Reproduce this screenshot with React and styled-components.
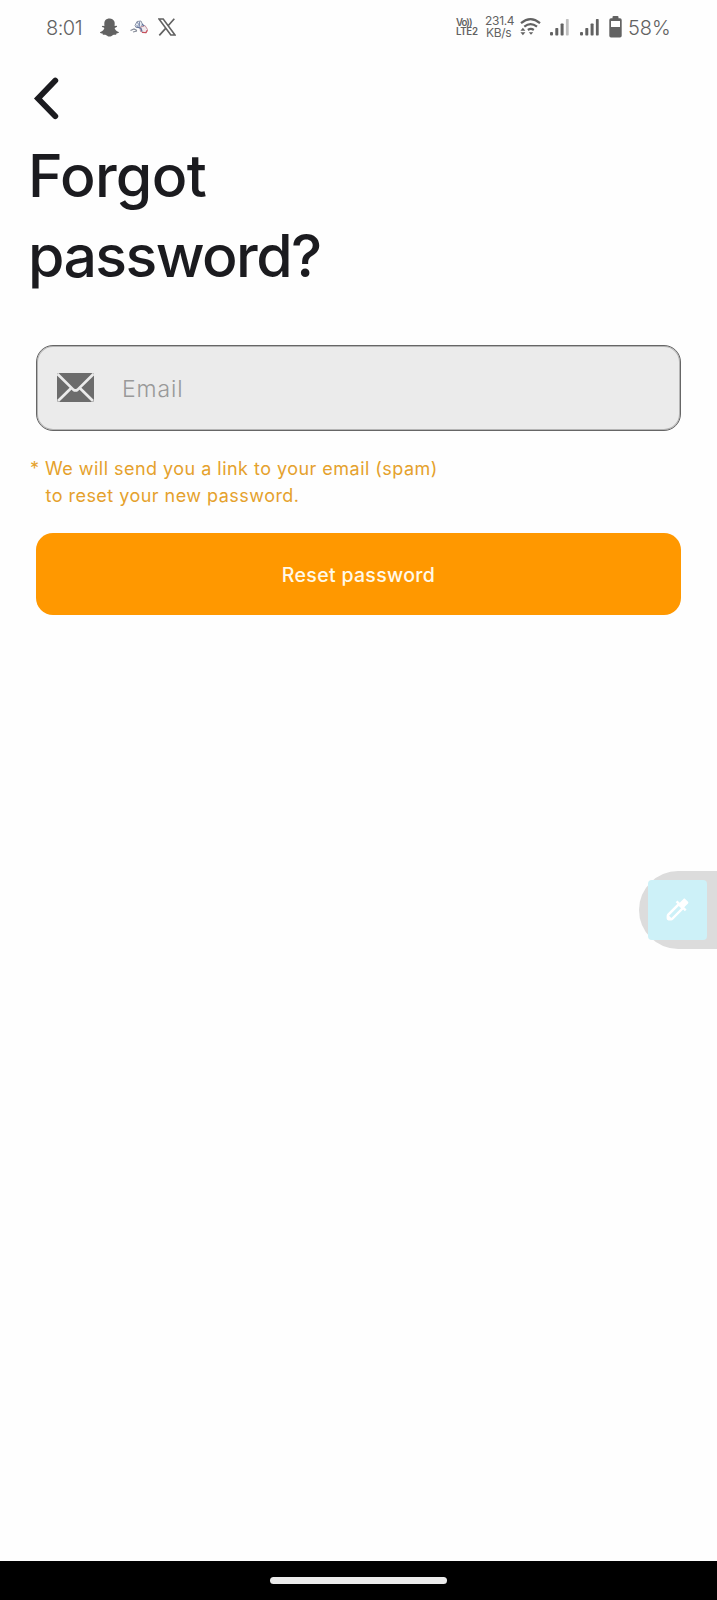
import React from "react";
import styled, { createGlobalStyle } from "styled-components";
import { FaSnapchatGhost } from "react-icons/fa";

const GlobalStyle = createGlobalStyle`
  * { box-sizing: border-box; }
  body { margin: 0; background: #fefefe; font-family: Inter, Roboto, sans-serif; }
  svg { display: block; flex: none; }
`;

const Screen = styled.div`
  position: relative;
  width: 717px;
  height: 1600px;
  display: flex;
  flex-direction: column;
  overflow: hidden;
  background: #fefefe;
`;

const StatusBar = styled.header`
  height: 54px;
  padding: 0 46px 0 46px;
  display: flex;
  align-items: center;
  justify-content: space-between;
  color: #626262;
`;

const StatusGroup = styled.div`
  display: flex;
  align-items: center;
`;

const StatusText = styled.span`
  font: 300 20px/24px Inter, sans-serif;
  letter-spacing: ${(p) => p.$spacing || "0"};
  width: ${(p) => p.$width}px;
  padding-top: 1px;
  white-space: nowrap;
`;

const IconSlot = styled.span`
  display: flex;
  margin-left: ${(p) => p.$gap}px;
`;

const Stack = styled.div`
  display: flex;
  flex-direction: column;
  white-space: nowrap;
  width: ${(p) => p.$width}px;
  margin-right: ${(p) => p.$gap}px;
  font: ${(p) => p.$font};
  letter-spacing: ${(p) => p.$spacing};
`;

const StackLine = styled.span`
  letter-spacing: ${(p) => p.$spacing || "inherit"};
  padding-left: ${(p) => p.$indent || 0}px;
`;

const Content = styled.main`
  flex: 1;
  padding: 21px 36px 0;
`;

const BackButton = styled.button`
  display: block;
  border: 0;
  padding: 0;
  margin-left: -4px;
  background: none;
  color: #1b1b1f;
`;

const Title = styled.h1`
  margin: 15px 0 0 -8px;
  font: 500 59px/80px Inter, sans-serif;
  color: #1b1b1f;
`;

const TitleLine = styled.span`
  display: block;
  letter-spacing: ${(p) => p.$spacing}px;
`;

const Field = styled.label`
  display: flex;
  align-items: center;
  height: 86px;
  margin-top: 49px;
  padding: 0 0 1px 20px;
  gap: 28px;
  border: 1px solid #666;
  border-radius: 17px;
  background: #ebebeb;
  box-shadow: inset 0 0 0 1px #b5b5b5;
  color: #6c6c6c;
`;

const Input = styled.input`
  flex: 1;
  min-width: 0;
  border: 0;
  outline: 0;
  padding: 3px 0 0;
  background: none;
  font: 300 23px/28px Inter, sans-serif;
  letter-spacing: 0.9px;
  &::placeholder { color: #999; opacity: 1; }
`;

const Hint = styled.p`
  margin: 25px 0 0 -6px;
  font: 400 18px/26.5px Inter, sans-serif;
  letter-spacing: 0.47px;
  color: #e5a12c;
`;

const HintLine = styled.span`
  display: block;
  white-space: nowrap;
  padding-left: ${(p) => p.$indent || 0}px;
`;

const ResetButton = styled.button`
  display: flex;
  align-items: center;
  justify-content: center;
  width: 100%;
  height: 82px;
  margin-top: 24px;
  padding: 2px 0 0;
  border: 0;
  border-radius: 17px;
  background: #ff9800;
  color: #fff9e8;
  font: 500 19.5px/24px Inter, sans-serif;
  letter-spacing: 0.32px;
`;

const FloatingTab = styled.aside`
  position: absolute;
  right: 0;
  top: 871px;
  width: 78px;
  height: 78px;
  padding: 9px;
  border-radius: 39px 0 0 39px;
  background: #dcdcdc;
`;

const PickerButton = styled.div`
  display: flex;
  align-items: center;
  justify-content: center;
  width: 59px;
  height: 60px;
  padding: 0 1px 2px 0;
  border-radius: 4px;
  background: #cdf1f8;
  color: #fff;
`;

const NavBar = styled.footer`
  height: 39px;
  display: flex;
  justify-content: center;
  align-items: center;
  background: #000;
`;

const HomeHandle = styled.div`
  width: 177px;
  height: 7px;
  border-radius: 4px;
  background: #ebebeb;
`;

const GameIcon = () => (
  <svg width="18" height="14" viewBox="0 0 18 14" fill="none">
    <path d="M5 5.5 7 1.5 11 1 12.5 4.5 10.5 7.5H6Z" fill="#e8edf4" stroke="#8d95a7" strokeWidth="1" />
    <path d="m7 2 2.5 3.5M9.5 1.5v5M6 6h4" stroke="#8290b0" />
    <path d="M.5 10.5 4 9l3 1.5M3 12l4-1" stroke="#858b97" strokeWidth="1.2" />
    <path d="m10 7.5 5-2 2.5 4-2 3.2-5-1.2Z" fill="#f0e9ed" stroke="#c48f9b" strokeWidth="1" />
    <path d="m7 7 4 1.5 1 3M12 4l2 2" stroke="#62749c" strokeWidth="1.3" />
    <path d="m12 12.5 4 .2 1.5-2.5" stroke="#c84f5b" strokeWidth="1.2" />
  </svg>
);

const XIcon = () => (
  <svg width="18" height="18" viewBox="0 0 18 18" fill="none" stroke="currentColor">
    <path d="M1 1h4.200L17 17h-4.200Z" strokeWidth="1.600" />
    <path d="M16.300.7 10.100 7.700M7.900 10.200 1.300 17.300" strokeWidth="1.700" />
  </svg>
);

const WifiIcon = () => (
  <svg width="21" height="18" viewBox="0 0 21 18" fill="none" stroke="currentColor">
    <path d="M1 5.2Q10.500-2.800 20 5.200" strokeWidth="2.200" />
    <path d="M4.300 8.700Q10.500 3.700 17 8.700" strokeWidth="2.200" />
    <path d="M7.900 12Q10.800 9.800 13.800 12" strokeWidth="2.200" />
    <path d="m8.800 14.200 2.200 2.500 2.200-2.500Z" fill="currentColor" stroke="none" />
    <path d="m.4 12.800 2.500-3 2.500 3ZM.4 14.200l2.500 3 2.500-3Z" fill="currentColor" stroke="none" />
  </svg>
);

const SignalIcon = ({ weak }) => (
  <svg width="19" height="17" viewBox="0 0 19 17" fill="currentColor">
    <rect x="0" y="13" width="3" height="3.500" rx="1" />
    <rect x="5.300" y="9" width="3" height="7.500" rx=".7" />
    <rect x="10.600" y="4.500" width="3" height="12" rx=".7" />
    <rect x="15.900" y="0" width="2.800" height="16.500" rx=".7" opacity={weak ? 0.4 : 1} />
  </svg>
);

const BatteryIcon = () => (
  <svg width="13" height="22" viewBox="0 0 13 22" fill="currentColor">
    <rect x="3.500" width="6" height="4" rx="1" />
    <path fillRule="evenodd" d="M2 2.200h9a1.700 1.700 0 0 1 1.700 1.700v15.800a1.700 1.700 0 0 1-1.700 1.700H2A1.700 1.700 0 0 1 .3 19.700V3.900A1.700 1.700 0 0 1 2 2.200ZM2 5v6h9V5Z" />
  </svg>
);

const MailIcon = () => (
  <svg width="37" height="29" viewBox="0 0 37 29">
    <rect width="37" height="29" rx="2" fill="currentColor" />
    <path d="M.5 1 16.300 16.600Q18.500 18.300 20.700 16.600L36.500 1M1 28 14 15.200M36 28 23 15.200" fill="none" stroke="#ebebeb" strokeWidth="2.700" />
  </svg>
);

const PickerIcon = () => (
  <svg width="29" height="29" viewBox="0 0 24 24" fill="currentColor">
    <path d="M20.710 5.630l-2.340-2.340c-.39-.39-1.020-.39-1.410 0l-3.120 3.120-1.930-1.910-1.410 1.410 1.420 1.420L3.700 15.550A2.500 2.500 0 0 0 3 17.300V19.500a1.500 1.500 0 0 0 1.500 1.500h2.200a2.500 2.500 0 0 0 1.750-.7l8.220-8.220 1.420 1.420 1.410-1.410-1.920-1.920 3.120-3.120c.4-.4.4-1.030.01-1.420zM6.920 19L5 17.080l8.060-8.060 1.920 1.920L6.920 19z" />
  </svg>
);

export default function App() {
  return (
    <Screen>
      <GlobalStyle />
      <StatusBar>
        <StatusGroup>
          <StatusText $width={36} $spacing="-0.5px">8:01</StatusText>
          <IconSlot $gap={18}><FaSnapchatGhost size={19} /></IconSlot>
          <IconSlot $gap={11}><GameIcon /></IconSlot>
          <IconSlot $gap={10}><XIcon /></IconSlot>
        </StatusGroup>
        <StatusGroup>
          <Stack $width={22} $gap={7} $font="600 9.7px/9px Inter, sans-serif" $spacing="-0.3px">
            <StackLine $spacing="-1px">Vo))</StackLine>
            <StackLine>LTE2</StackLine>
          </Stack>
          <Stack $width={28} $gap={7} $font="400 12px/12px Inter, sans-serif" $spacing="-0.3px">
            <StackLine>231.4</StackLine>
            <StackLine $indent={1}>KB/s</StackLine>
          </Stack>
          <WifiIcon />
          <IconSlot $gap={9}><SignalIcon weak /></IconSlot>
          <IconSlot $gap={11}><SignalIcon /></IconSlot>
          <IconSlot $gap={10}><BatteryIcon /></IconSlot>
          <IconSlot $gap={6}><StatusText $width={43}>58%</StatusText></IconSlot>
        </StatusGroup>
      </StatusBar>
      <Content>
        <BackButton aria-label="Back">
          <svg width="30" height="46" viewBox="0 0 30 46" fill="none" stroke="currentColor" strokeWidth="5.800" strokeLinecap="round" strokeLinejoin="miter">
            <path d="M23.300 5.500 6 23.500 23.300 41.200" />
          </svg>
        </BackButton>
        <Title>
          <TitleLine $spacing={-0.7}>Forgot</TitleLine>
          <TitleLine $spacing={-1.6}>password?</TitleLine>
        </Title>
        <Field>
          <MailIcon />
          <Input type="email" placeholder="Email" />
        </Field>
        <Hint>
          <HintLine>* We will send you a link to your email (spam)</HintLine>
          <HintLine $indent={15.5}>to reset your new password.</HintLine>
        </Hint>
        <ResetButton>Reset password</ResetButton>
      </Content>
      <FloatingTab>
        <PickerButton><PickerIcon /></PickerButton>
      </FloatingTab>
      <NavBar><HomeHandle /></NavBar>
    </Screen>
  );
}
